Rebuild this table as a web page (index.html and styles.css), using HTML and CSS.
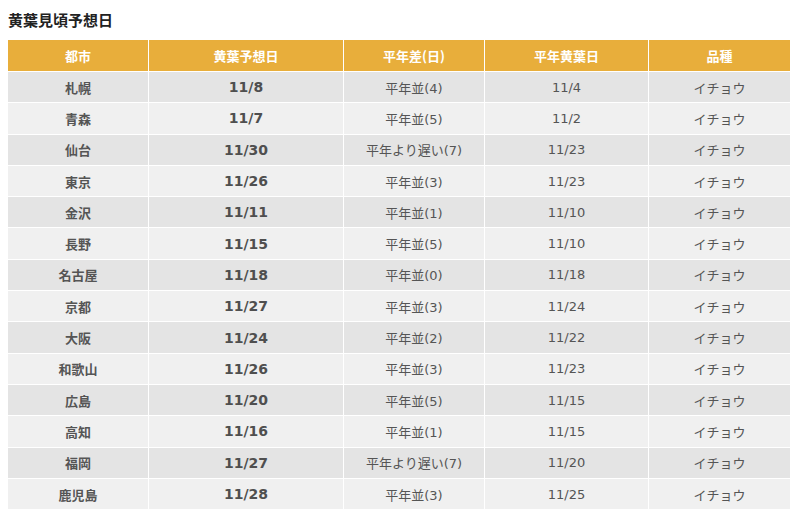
FILE: index.html
```html
<!DOCTYPE html>
<html lang="ja">
<head>
<meta charset="utf-8">
<title>黄葉見頃予想日</title>
<link rel="stylesheet" href="styles.css">
</head>
<body>
<h2 class="title">黄葉見頃予想日</h2>
<table class="forecast">
  <colgroup>
    <col class="c1"><col class="c2"><col class="c3"><col class="c4"><col class="c5">
  </colgroup>
  <thead>
    <tr><th>都市</th><th>黄葉予想日</th><th>平年差(日)</th><th>平年黄葉日</th><th>品種</th></tr>
  </thead>
  <tbody>
    <tr><td class="city">札幌</td><td class="date">11/8</td><td>平年並(4)</td><td>11/4</td><td>イチョウ</td></tr>
    <tr><td class="city">青森</td><td class="date">11/7</td><td>平年並(5)</td><td>11/2</td><td>イチョウ</td></tr>
    <tr><td class="city">仙台</td><td class="date">11/30</td><td>平年より遅い(7)</td><td>11/23</td><td>イチョウ</td></tr>
    <tr><td class="city">東京</td><td class="date">11/26</td><td>平年並(3)</td><td>11/23</td><td>イチョウ</td></tr>
    <tr><td class="city">金沢</td><td class="date">11/11</td><td>平年並(1)</td><td>11/10</td><td>イチョウ</td></tr>
    <tr><td class="city">長野</td><td class="date">11/15</td><td>平年並(5)</td><td>11/10</td><td>イチョウ</td></tr>
    <tr><td class="city">名古屋</td><td class="date">11/18</td><td>平年並(0)</td><td>11/18</td><td>イチョウ</td></tr>
    <tr><td class="city">京都</td><td class="date">11/27</td><td>平年並(3)</td><td>11/24</td><td>イチョウ</td></tr>
    <tr><td class="city">大阪</td><td class="date">11/24</td><td>平年並(2)</td><td>11/22</td><td>イチョウ</td></tr>
    <tr><td class="city">和歌山</td><td class="date">11/26</td><td>平年並(3)</td><td>11/23</td><td>イチョウ</td></tr>
    <tr><td class="city">広島</td><td class="date">11/20</td><td>平年並(5)</td><td>11/15</td><td>イチョウ</td></tr>
    <tr><td class="city">高知</td><td class="date">11/16</td><td>平年並(1)</td><td>11/15</td><td>イチョウ</td></tr>
    <tr><td class="city">福岡</td><td class="date">11/27</td><td>平年より遅い(7)</td><td>11/20</td><td>イチョウ</td></tr>
    <tr><td class="city">鹿児島</td><td class="date">11/28</td><td>平年並(3)</td><td>11/25</td><td>イチョウ</td></tr>
  </tbody>
</table>
</body>
</html>
```

FILE: styles.css
```css
html, body {
  margin: 0;
  padding: 0;
  background: #ffffff;
}
body {
  padding: 0 0 0 7px;
  font-family: "DejaVu Sans", "Noto Sans CJK JP", sans-serif;
  color: #555555;
}
.title {
  margin: 0;
  padding: 10px 0 0 1px;
  height: 29px;
  font-family: "Noto Sans CJK JP", sans-serif;
  font-size: 15px;
  line-height: 20px;
  font-weight: bold;
  color: #222222;
}
.forecast {
  border-collapse: collapse;
  table-layout: fixed;
  width: 783px;
  font-size: 13px;
}
.c1 { width: 141px; }
.c2 { width: 195px; }
.c3 { width: 141px; }
.c4 { width: 164px; }
.c5 { width: 142px; }
.forecast th,
.forecast td {
  border: 1px solid #ffffff;
  text-align: center;
  padding: 0;
  vertical-align: middle;
}
.forecast thead tr {
  height: 32px;
}
.forecast th {
  background: #e8ae3b;
  color: #ffffff;
  font-weight: bold;
  font-family: "Noto Sans CJK JP", sans-serif;
  font-size: 13px;
}
.forecast tbody tr {
  height: 31.3px;
}
.forecast tbody tr:nth-child(odd) td {
  background: #e4e4e4;
}
.forecast tbody tr:nth-child(even) td {
  background: #f0f0f0;
}
.forecast tbody td.city {
  font-weight: bold;
  font-family: "Noto Sans CJK JP", sans-serif;
}
.forecast tbody td.date {
  background: #fbf0ea;
  font-weight: bold;
  font-size: 14px;
  color: #4f4f4f;
}
```
